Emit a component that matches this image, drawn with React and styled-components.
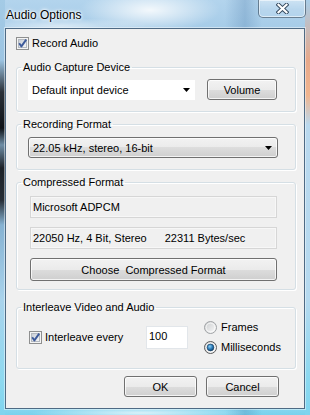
import React from 'react';
import styled, { createGlobalStyle } from 'styled-components';

const Global = createGlobalStyle`
  html, body { margin: 0; padding: 0; width: 310px; height: 415px; overflow: hidden; }
  body { font-family: "Liberation Sans", Arial, sans-serif; font-size: 11px; color: #000; }
  * { box-sizing: border-box; }
`;

const Window = styled.div`
  width: 310px;
  height: 415px;
  display: flex;
  flex-direction: column;
  padding: 0 5px 6px 5px;
  background:
    linear-gradient(to bottom, #a4cbe6 0, #9cc4e2 60px, #2a3038 92px, #0d1116 128px, #6f8ea6 145px, #1c2127 168px, #262d35 200px, #86b2d2 225px, #a9d3ec 300px, #8ed9f0 380px, #7fd4ee 415px) left top / 5px 100% no-repeat,
    linear-gradient(to bottom, #a9cde8 0, #e7a88a 60px, #f0b48e 95px, #b9d8ee 125px, #b5d9ef 300px, #8ad8f0 380px, #7fd4ee 415px) right top / 5px 100% no-repeat,
    radial-gradient(ellipse 70px 22px at 150px 10px, rgba(255,255,255,0.85), rgba(255,255,255,0)),
    radial-gradient(ellipse 90px 8px at 60px 26px, rgba(255,255,255,0.55), rgba(255,255,255,0)),
    radial-gradient(ellipse 110px 6px at 140px 413px, rgba(255,255,255,0.7), rgba(255,255,255,0)),
    linear-gradient(to right, rgba(0,0,0,0) 0, rgba(0,0,0,0) 225px, rgba(60,110,160,0.25) 245px, rgba(0,0,0,0) 262px),
    linear-gradient(to bottom, #b3d4ed 0, #a6cce8 28px, #a9d0ea 220px, #8fd8f0 405px, #79d2ed 415px);
`;

const TitleBar = styled.div`
  height: 28px;
  flex: none;
  display: flex;
  align-items: flex-start;
  justify-content: space-between;
`;

const Title = styled.div`
  margin: 8px 0 0 1px;
  font-size: 12px;
  line-height: 14px;
  text-shadow: 0 0 5px #fff, 0 0 3px #fff, 0 0 2px rgba(255,255,255,0.9);
`;

const CloseButton = styled.div`
  width: 48px;
  height: 18px;
  margin-right: -1px;
  display: flex;
  align-items: center;
  justify-content: center;
  border: 1px solid rgba(30, 50, 70, 0.55);
  border-top: none;
  border-radius: 0 0 5px 5px;
  background: linear-gradient(to bottom, rgba(255,255,255,0.35), rgba(255,255,255,0.12) 55%, rgba(200,225,245,0.3));
  box-shadow: inset 0 0 0 1px rgba(255,255,255,0.55);
`;

const Client = styled.div`
  flex: 1;
  display: flex;
  flex-direction: column;
  border: 1px solid #4e6a84;
  box-shadow: 0 0 0 1px rgba(255,255,255,0.45);
  background: #f0f0f0;
  padding: 0 8px 0 10px;
`;

const CheckRow = styled.label`
  display: flex;
  align-items: center;
  gap: ${p => p.$gap || 3}px;
  height: 13px;
  line-height: 13px;
  margin-top: ${p => p.$mt || 0}px;
  white-space: nowrap;
`;

const Group = styled.fieldset`
  margin: ${p => p.$mt}px 0 0 0;
  padding: 0;
  min-width: 0;
  border: 1px solid #d5dfe5;
  border-radius: 3px;
  box-shadow: inset 1px 1px 0 #fff, 1px 1px 0 #fff;
`;

const Legend = styled.legend`
  margin-left: 4px;
  padding: 0 2px;
  line-height: 13px;
  height: 13px;
  font-size: 11px;
`;

const GroupBody = styled.div`
  padding: ${p => p.$pad};
  display: flex;
  flex-direction: ${p => (p.$column ? 'column' : 'row')};
  align-items: ${p => (p.$column ? 'flex-start' : 'center')};
  gap: ${p => p.$gap || 0}px;
`;

const PlainCombo = styled.div`
  width: ${p => p.$w}px;
  height: 20px;
  background: #fff;
  display: flex;
  align-items: center;
  justify-content: space-between;
  padding: 0 5px 0 4px;
`;

const StyledCombo = styled.div`
  width: ${p => p.$w}px;
  height: 21px;
  border: 1px solid #707070;
  border-radius: 3px;
  background: linear-gradient(to bottom, #f2f2f2 0%, #ebebeb 50%, #dddddd 50%, #cfcfcf 100%);
  box-shadow: inset 0 0 0 1px rgba(255,255,255,0.75);
  display: flex;
  align-items: center;
  justify-content: space-between;
  padding: 0 5px 0 4px;
`;

const Button = styled.button`
  width: ${p => p.$w}px;
  height: ${p => p.$h || 21}px;
  padding: 0;
  border: 1px solid #707070;
  border-radius: 3px;
  background: linear-gradient(to bottom, #f2f2f2 0%, #ebebeb 50%, #dddddd 50%, #cfcfcf 100%);
  box-shadow: inset 0 0 0 1px rgba(255,255,255,0.75);
  font-family: "Liberation Sans", Arial, sans-serif;
  font-size: 11px;
  color: #000;
  white-space: pre;
  flex: none;
`;

const ReadField = styled.div`
  width: ${p => p.$w}px;
  height: 22px;
  border: 1px solid #d6d6d6;
  box-shadow: inset 0 0 0 1px #f7f7f7;
  background: #f0f0f0;
  display: flex;
  align-items: center;
  gap: 18px;
  padding-left: 2px;
  white-space: nowrap;
`;

const InterleaveRow = styled.div`
  display: grid;
  grid-template-columns: 117px 42px auto;
  align-items: center;
`;

const Edit = styled.div`
  width: 42px;
  height: 23px;
  background: #fff;
  border: 1px solid #e2e6ea;
  padding: 3px 0 0 2px;
  line-height: 13px;
`;

const RadioCol = styled.div`
  display: flex;
  flex-direction: column;
  gap: 7px;
  margin-left: 16px;
`;

const ButtonRow = styled.div`
  display: flex;
  justify-content: flex-end;
  gap: 9px;
  margin-top: 7px;
  padding-right: 17px;
`;

const Arrow = () => (
  <svg width="7" height="4" viewBox="0 0 7 4">
    <polygon points="0,0 7,0 3.5,4" fill="#000" />
  </svg>
);

const CheckBox = ({ id }) => (
  <svg width="13" height="13" viewBox="0 0 13 13" style={{ flex: 'none' }}>
    <defs>
      <linearGradient id={id} x1="0" y1="0" x2="1" y2="1">
        <stop offset="0" stopColor="#c6ccd4" />
        <stop offset="1" stopColor="#f8f8f8" />
      </linearGradient>
    </defs>
    <rect x="0.5" y="0.5" width="12" height="12" fill="#f4f4f4" stroke="#8e8f8f" />
    <rect x="2.5" y="2.5" width="8" height="8" fill={`url(#${id})`} stroke="#b4b9c0" />
    <path d="M3.2 6.3 L5.4 9.4 L10.2 2.6" stroke="#3d5a9a" strokeWidth="1.9" fill="none" strokeLinejoin="round" />
  </svg>
);

const Radio = ({ id, checked }) => (
  <svg width="13" height="13" viewBox="0 0 13 13" style={{ flex: 'none' }}>
    <defs>
      <linearGradient id={`${id}o`} x1="0" y1="0" x2="1" y2="1">
        <stop offset="0" stopColor="#c9cbcd" />
        <stop offset="1" stopColor="#fbfbfb" />
      </linearGradient>
      <radialGradient id={`${id}d`} cx="0.4" cy="0.35" r="0.7">
        <stop offset="0" stopColor="#8fd2f6" />
        <stop offset="0.55" stopColor="#2a7ab8" />
        <stop offset="1" stopColor="#0d3d66" />
      </radialGradient>
    </defs>
    <circle cx="6.5" cy="6.5" r="6" fill={`url(#${id}o)`} stroke={checked ? '#5b5b5b' : '#a0a3a6'} />
    <circle cx="6.5" cy="6.5" r="4.4" fill="none" stroke="#ffffff" strokeOpacity="0.7" />
    {checked && <circle cx="6.5" cy="6.5" r="3.4" fill={`url(#${id}d)`} stroke="#1a3e60" strokeWidth="0.6" />}
  </svg>
);

const CloseGlyph = () => (
  <svg width="13" height="11" viewBox="0 0 13 11">
    <path d="M2.5 1.8 L10.5 9.2 M10.5 1.8 L2.5 9.2" stroke="#34495e" strokeWidth="4" strokeLinecap="square" />
    <path d="M2.5 1.8 L10.5 9.2 M10.5 1.8 L2.5 9.2" stroke="#ffffff" strokeWidth="2.2" strokeLinecap="square" />
  </svg>
);

export default function App() {
  return (
    <>
      <Global />
      <Window>
        <TitleBar>
          <Title>Audio Options</Title>
          <CloseButton>
            <CloseGlyph />
          </CloseButton>
        </TitleBar>
        <Client>
          <CheckRow $mt={8}>
            <CheckBox id="cb1" />
            <span>Record Audio</span>
          </CheckRow>

          <Group $mt={11}>
            <Legend>Audio Capture Device</Legend>
            <GroupBody $pad="5px 0 11px 11px" $gap={12}>
              <PlainCombo $w={167}>
                <span>Default input device</span>
                <Arrow />
              </PlainCombo>
              <Button $w={70}>Volume</Button>
            </GroupBody>
          </Group>

          <Group $mt={6}>
            <Legend>Recording Format</Legend>
            <GroupBody $pad="6px 0 11px 11px">
              <StyledCombo $w={250}>
                <span>22.05 kHz, stereo, 16-bit</span>
                <Arrow />
              </StyledCombo>
            </GroupBody>
          </Group>

          <Group $mt={6}>
            <Legend>Compressed Format</Legend>
            <GroupBody $pad="7px 0 8px 13px" $column $gap={9}>
              <ReadField $w={247}>Microsoft ADPCM</ReadField>
              <ReadField $w={247}>
                <span>22050 Hz, 4 Bit, Stereo</span>
                <span>22311 Bytes/sec</span>
              </ReadField>
              <Button $w={247} $h={23}>{'Choose  Compressed Format'}</Button>
            </GroupBody>
          </Group>

          <Group $mt={11}>
            <Legend>Interleave Video and Audio</Legend>
            <GroupBody $pad="7px 0 14px 12px">
              <InterleaveRow>
                <CheckRow $gap={3}>
                  <CheckBox id="cb2" />
                  <span>Interleave every</span>
                </CheckRow>
                <Edit>100</Edit>
                <RadioCol>
                  <CheckRow $gap={4}>
                    <Radio id="r1" />
                    <span>Frames</span>
                  </CheckRow>
                  <CheckRow $gap={4}>
                    <Radio id="r2" checked />
                    <span>Milliseconds</span>
                  </CheckRow>
                </RadioCol>
              </InterleaveRow>
            </GroupBody>
          </Group>

          <ButtonRow>
            <Button $w={73}>OK</Button>
            <Button $w={73}>Cancel</Button>
          </ButtonRow>
        </Client>
      </Window>
    </>
  );
}
